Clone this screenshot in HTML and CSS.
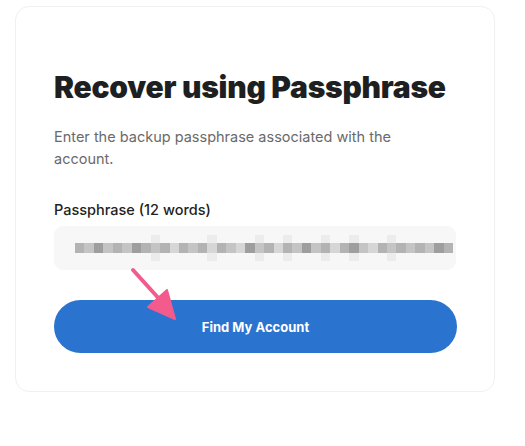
FILE: index.html
```html
<!DOCTYPE html>
<html>
<head>
<meta charset="utf-8">
<link rel="stylesheet" href="styles.css">
</head>
<body>
<div class="card">
  <h1 class="title">Recover using Passphrase</h1>
  <p class="desc">Enter the backup passphrase associated with the account.</p>
  <label class="label">Passphrase (12 words)</label>
  <div class="input">
    <div class="blur">
      <span class="s2"></span><span class="s1"></span><span class="s3"></span><span class="s1"></span><span class="s2"></span><span class="s1"></span><span class="s3"></span><span class="s2"></span><span class="s1 tall"></span><span class="s2"></span><span class="s0"></span><span class="s2"></span><span class="s1"></span><span class="s2"></span><span class="s0 tall"></span><span class="s2"></span><span class="s1"></span><span class="s0"></span><span class="s3"></span><span class="s1 tall"></span><span class="s2"></span><span class="s0"></span><span class="s2 tall"></span><span class="s1"></span><span class="s3"></span><span class="s1"></span><span class="s2 tall"></span><span class="s0"></span><span class="s2"></span><span class="s3 tall"></span><span class="s1"></span><span class="s0"></span><span class="s2"></span><span class="s1 tall"></span><span class="s2"></span><span class="s1"></span><span class="s2"></span><span class="s1"></span><span class="s3"></span><span class="s2"></span>
    </div>
  </div>
  <div class="btn-wrap">
    <button class="btn">Find My Account</button>
    <svg class="arrow" width="60" height="60" viewBox="0 0 60 60">
      <line x1="3" y1="3" x2="32" y2="35" stroke="#f25b8c" stroke-width="4" stroke-linecap="round"/>
      <polygon points="18,40 37,23 45,52" fill="#f25b8c" stroke="#f25b8c" stroke-width="2" stroke-linejoin="round"/>
    </svg>
  </div>
</div>
</body>
</html>
```
FILE: styles.css
```css
* { box-sizing: border-box; }
html, body { margin: 0; padding: 0; background: #ffffff; }
body {
  font-family: Inter, "Liberation Sans", sans-serif;
  width: 525px;
  height: 446px;
  overflow: hidden;
}
.card {
  margin: 6px 0 0 15px;
  width: 480px;
  height: 386px;
  border: 1px solid #f0f0f0;
  border-radius: 14px;
  padding: 62px 38px 0 38px;
}
.title {
  margin: 0;
  font-size: 30px;
  line-height: 36px;
  font-weight: 900;
  color: #1e1f21;
  letter-spacing: -0.25px;
}
.desc {
  margin: 21px 0 0 0;
  font-size: 14.5px;
  line-height: 22px;
  color: #6a6a6a;
  width: 380px;
}
.label {
  display: block;
  margin-top: 30px;
  font-size: 14.5px;
  line-height: 20px;
  font-weight: 500;
  color: #222222;
}
.input {
  margin-top: 6px;
  height: 44px;
  width: 402px;
  background: #f7f7f7;
  border-radius: 9px;
  display: flex;
  align-items: center;
  padding: 0 3px 0 21px;
}
.blur {
  display: flex;
  align-items: center;
  width: 378px;
  height: 26px;
  filter: blur(0.6px);
}
.blur span {
  flex: 1;
  height: 10px;
}
.blur span.tall {
  height: 26px;
  background-image: linear-gradient(#ececec 0 8px, transparent 8px 18px, #ececec 18px);
}
.s0 { background-color: #d6d6d6; }
.s1 { background-color: #c4c4c4; }
.s2 { background-color: #b3b3b3; }
.s3 { background-color: #9e9e9e; }
.btn-wrap {
  position: relative;
  margin-top: 30px;
}
.btn {
  display: block;
  width: 403px;
  height: 53px;
  border: none;
  border-radius: 27px;
  background: #2a73cf;
  color: #ffffff;
  font-family: Inter, "Liberation Sans", sans-serif;
  font-size: 13px;
  font-weight: 700;
  padding: 0;
}
.arrow {
  position: absolute;
  left: 76px;
  top: -33px;
}
```
